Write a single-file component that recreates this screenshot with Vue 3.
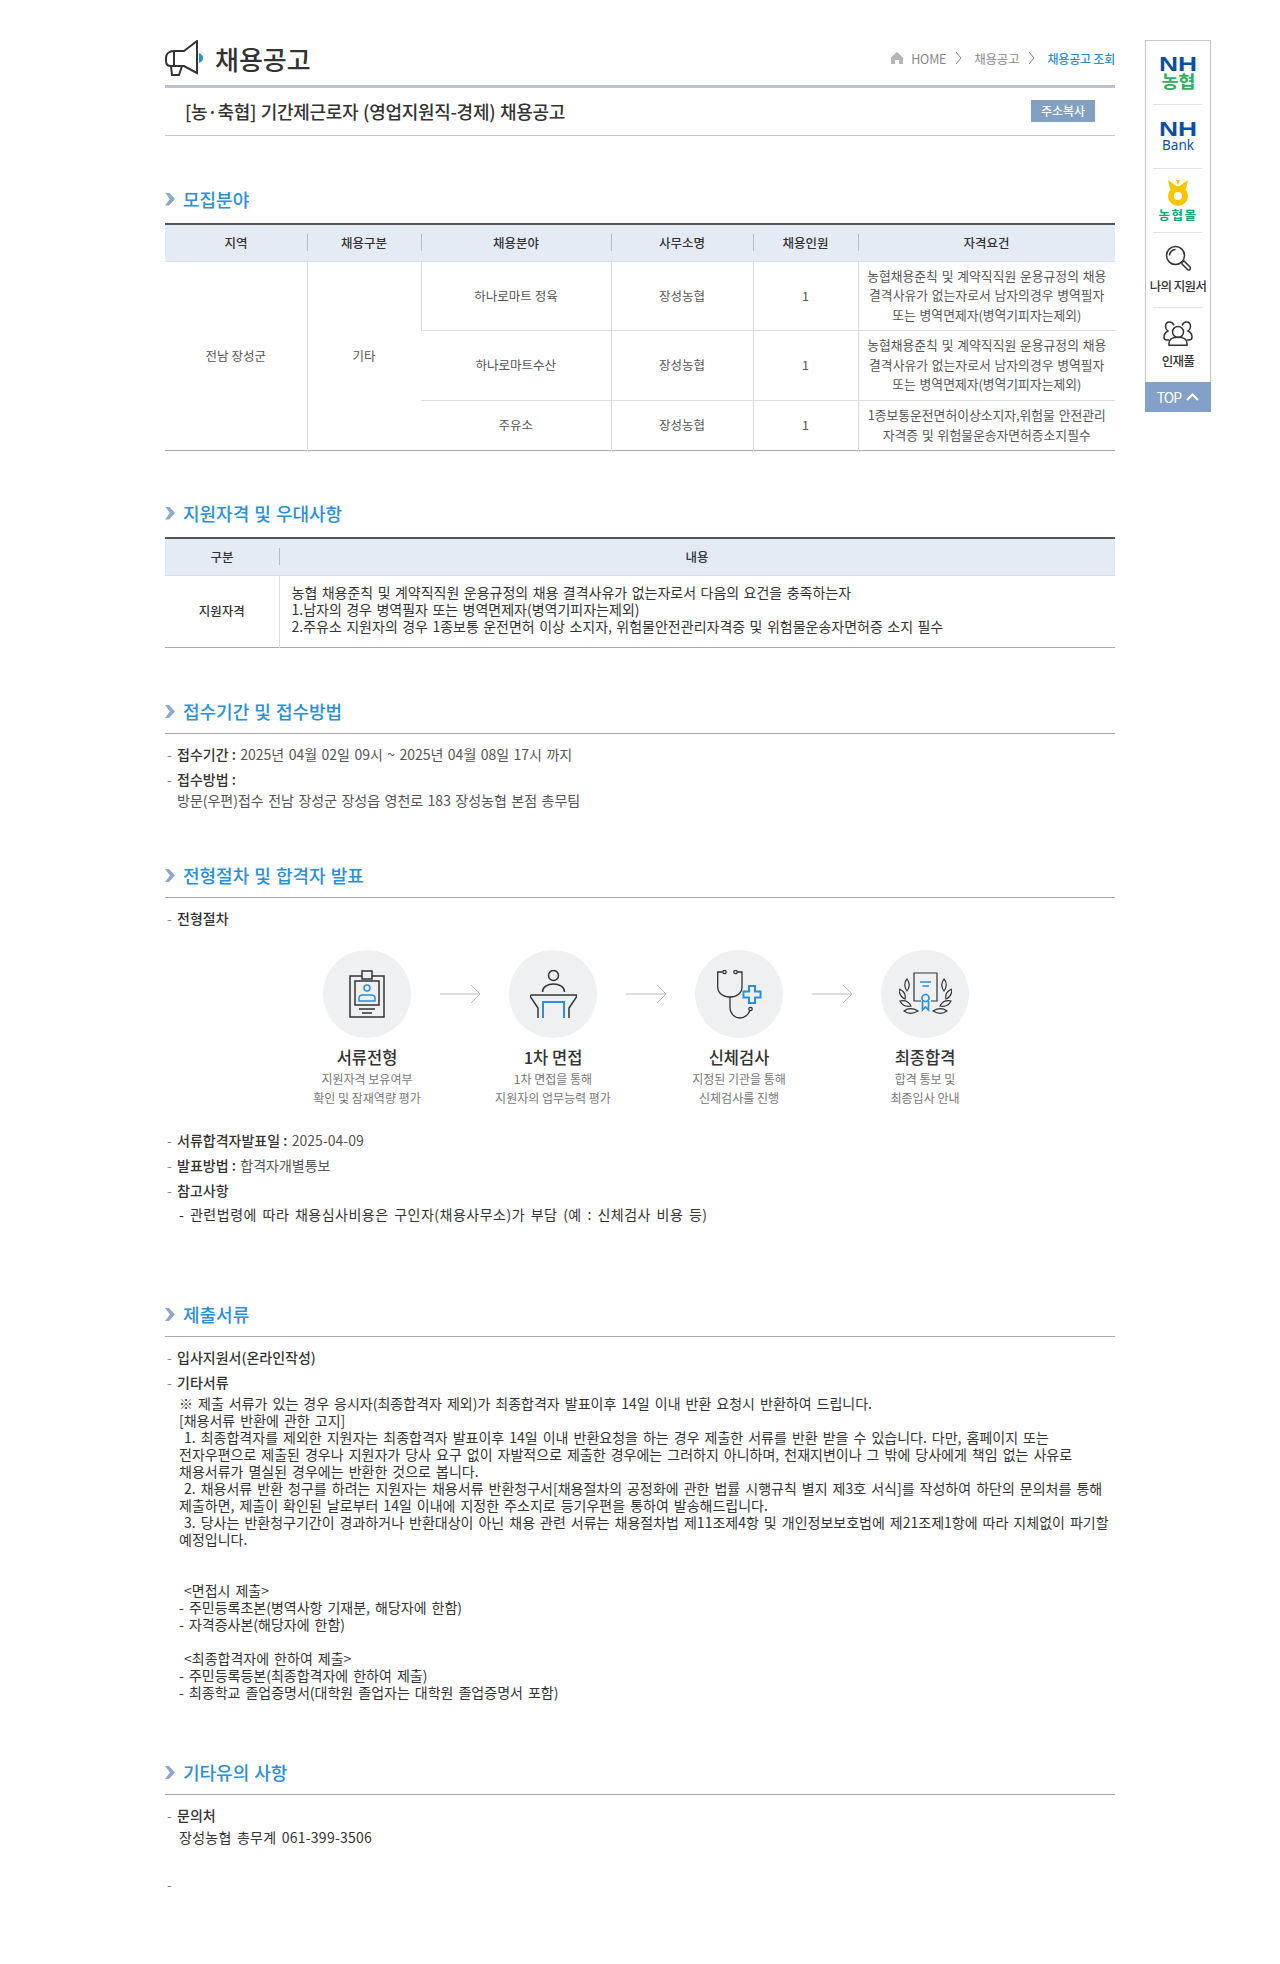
<script setup>
const columns = ['지역', '채용구분', '채용분야', '사무소명', '채용인원', '자격요건']

const rows = [
  { field: '하나로마트 정육', office: '장성농협', count: 1, height: 69, req: '농협채용준칙 및 계약직직원 운용규정의 채용\n결격사유가 없는자로서 남자의경우 병역필자\n또는 병역면제자(병역기피자는제외)' },
  { field: '하나로마트수산', office: '장성농협', count: 1, height: 70, req: '농협채용준칙 및 계약직직원 운용규정의 채용\n결격사유가 없는자로서 남자의경우 병역필자\n또는 병역면제자(병역기피자는제외)' },
  { field: '주유소', office: '장성농협', count: 1, height: 50, req: '1종보통운전면허이상소지자,위험물 안전관리\n자격증 및 위험물운송자면허증소지필수' },
]

const qualText = `농협 채용준칙 및 계약직직원 운용규정의 채용 결격사유가 없는자로서 다음의 요건을 충족하는자
1.남자의 경우 병역필자 또는 병역면제자(병역기피자는제외)
2.주유소 지원자의 경우 1종보통 운전면허 이상 소지자, 위험물안전관리자격증 및 위험물운송자면허증 소지 필수`

const steps = [
  { title: '서류전형', desc: '지원자격 보유여부\n확인 및 잠재역량 평가', icon: 'doc' },
  { title: '1차 면접', desc: '1차 면접을 통해\n지원자의 업무능력 평가', icon: 'desk' },
  { title: '신체검사', desc: '지정된 기관을 통해\n신체검사를 진행', icon: 'steth' },
  { title: '최종합격', desc: '합격 통보 및\n최종입사 안내', icon: 'cert' },
]

const docsText = `※ 제출 서류가 있는 경우 응시자(최종합격자 제외)가 최종합격자 발표이후 14일 이내 반환 요청시 반환하여 드립니다.
[채용서류 반환에 관한 고지]
 1. 최종합격자를 제외한 지원자는 최종합격자 발표이후 14일 이내 반환요청을 하는 경우 제출한 서류를 반환 받을 수 있습니다. 다만, 홈페이지 또는
전자우편으로 제출된 경우나 지원자가 당사 요구 없이 자발적으로 제출한 경우에는 그러하지 아니하며, 천재지변이나 그 밖에 당사에게 책임 없는 사유로
채용서류가 멸실된 경우에는 반환한 것으로 봅니다.
 2. 채용서류 반환 청구를 하려는 지원자는 채용서류 반환청구서[채용절차의 공정화에 관한 법률 시행규칙 별지 제3호 서식]를 작성하여 하단의 문의처를 통해
제출하면, 제출이 확인된 날로부터 14일 이내에 지정한 주소지로 등기우편을 통하여 발송해드립니다.
 3. 당사는 반환청구기간이 경과하거나 반환대상이 아닌 채용 관련 서류는 채용절차법 제11조제4항 및 개인정보보호법에 제21조제1항에 따라 지체없이 파기할
예정입니다.


 <면접시 제출>
- 주민등록초본(병역사항 기재분, 해당자에 한함)
- 자격증사본(해당자에 한함)

 <최종합격자에 한하여 제출>
- 주민등록등본(최종합격자에 한하여 제출)
- 최종학교 졸업증명서(대학원 졸업자는 대학원 졸업증명서 포함)`
</script>

<template>
  <div class="page">
    <main class="content">
      <header class="top">
        <div class="brand">
          <svg width="39" height="36" viewBox="0 0 39 36" fill="none" stroke="#333" stroke-width="2">
            <path d="M32 1L19 11H9C4 11 1 14 1 18V21C1 24 3 26 6 26H19L32 33z" />
            <path d="M9 11V26M6 26L7 35H14L17 26" />
            <path d="M34 13c3 1 4 3 4 5s-1 4-4 5z" fill="#2a8fdc" stroke="none" />
          </svg>
          <h1>채용공고</h1>
        </div>
        <nav class="crumb">
          <svg width="12" height="12" viewBox="0 0 12 12"><path d="M6 0L12 5.500V12H8V8H4v4H0V5.500z" fill="#b5b5b5" /></svg>
          <span class="home">HOME</span>
          <svg class="gt" width="7" height="14" viewBox="0 0 7 14" fill="none" stroke="#888"><path d="M1 1l5 6-5 6" /></svg>
          <span>채용공고</span>
          <svg class="gt" width="7" height="14" viewBox="0 0 7 14" fill="none" stroke="#888"><path d="M1 1l5 6-5 6" /></svg>
          <b>채용공고 조회</b>
        </nav>
      </header>

      <div class="subject">
        <h2>[농·축협] 기간제근로자 (영업지원직-경제) 채용공고</h2>
        <button class="copy">주소복사</button>
      </div>

      <h3 class="sec first">모집분야</h3>
      <table class="tbl">
        <colgroup>
          <col style="width: 142px" />
          <col style="width: 114px" />
          <col style="width: 190px" />
          <col style="width: 142px" />
          <col style="width: 105px" />
          <col />
        </colgroup>
        <thead>
          <tr>
            <th v-for="c in columns" :key="c">{{ c }}</th>
          </tr>
        </thead>
        <tbody>
          <tr v-for="(r, i) in rows" :key="i" :style="{ height: r.height + 'px' }">
            <td v-if="i === 0" class="span" rowspan="3">전남 장성군</td>
            <td v-if="i === 0" class="span" rowspan="3">기타</td>
            <td>{{ r.field }}</td>
            <td>{{ r.office }}</td>
            <td>{{ r.count }}</td>
            <td class="req">{{ r.req }}</td>
          </tr>
        </tbody>
      </table>

      <h3 class="sec">지원자격 및 우대사항</h3>
      <table class="tbl">
        <colgroup>
          <col style="width: 114px" />
          <col />
        </colgroup>
        <thead>
          <tr>
            <th>구분</th>
            <th>내용</th>
          </tr>
        </thead>
        <tbody>
          <tr class="qual">
            <td class="strong">지원자격</td>
            <td class="body">{{ qualText }}</td>
          </tr>
        </tbody>
      </table>

      <h3 class="sec line">접수기간 및 접수방법</h3>
      <ul class="items">
        <li><b>접수기간 :</b> 2025년 04월 02일 09시 ~ 2025년 04월 08일 17시 까지</li>
        <li><b>접수방법 :</b><br />방문(우편)접수 전남 장성군 장성읍 영천로 183 장성농협 본점 총무팀</li>
      </ul>

      <h3 class="sec line process">전형절차 및 합격자 발표</h3>
      <ul class="items">
        <li><b>전형절차</b></li>
      </ul>
      <div class="steps">
        <template v-for="(s, i) in steps" :key="s.title">
          <div class="step">
            <div class="circle">
              <svg v-if="s.icon === 'doc'" width="36" height="48" viewBox="0 0 36 48" fill="none" stroke="#333" stroke-width="1.500">
                <path d="M13 6H1v41h34V6H23" />
                <path d="M13 9V1h10v8z" />
                <path d="M6 11h24v24H6z" />
                <path d="M10 39h16M13 43h10" />
                <circle cx="18" cy="18" r="3" stroke="#2a8fdc" />
                <path d="M10 31v-3c0-2 2-3 4-3h8c2 0 4 1 4 3v3z" stroke="#2a8fdc" />
              </svg>
              <svg v-else-if="s.icon === 'desk'" width="47" height="48" viewBox="0 0 47 48" fill="none" stroke="#333" stroke-width="1.500">
                <circle cx="23.500" cy="5.500" r="5" />
                <path d="M12.500 22c0-5 5-8 11-8s11 3 11 8" />
                <path d="M.5 25H46.500V27L39 38V48M.5 25V27L8 38V48" />
                <path d="M13 48V32h21v16" stroke="#2a8fdc" stroke-width="2" />
              </svg>
              <svg v-else-if="s.icon === 'steth'" width="45" height="49" viewBox="0 0 45 49" fill="none" stroke="#333" stroke-width="1.300">
                <path d="M5.500 2H.7V17C.7 23 6 27 13 27s12-4 12-10V2h-4.500" />
                <circle cx="7.500" cy="2" r="1.700" />
                <circle cx="18.500" cy="2" r="1.700" />
                <path d="M13 27v10c0 7 5 11 10 11s9-4 10-8" />
                <circle cx="33.500" cy="39" r="1.700" />
                <path d="M32 16h6v5.500h5.500v6H38v5.500h-6v-5.500h-5.500v-6H32z" stroke="#2a8fdc" stroke-width="2" fill="#eff0f2" />
              </svg>
              <svg v-else width="53" height="44" viewBox="0 0 53 44" fill="none" stroke="#333" stroke-width="1.200">
                <path d="M22 29h-7V1h23v28h-6" />
                <path d="M8 7c-3 3-3 8 0 12 3-4 3-8 0-12zM0 17c0 4 2 8 6 10 1-4-1-8-6-10zM1 29c2 4 6 6 11 5-2-4-6-6-11-5zM5 39c4 3 9 3 14 0-5-3-10-3-14 0z" />
                <path transform="matrix(-1 0 0 1 53 0)" d="M8 7c-3 3-3 8 0 12 3-4 3-8 0-12zM0 17c0 4 2 8 6 10 1-4-1-8-6-10zM1 29c2 4 6 6 11 5-2-4-6-6-11-5zM5 39c4 3 9 3 14 0-5-3-10-3-14 0z" />
                <path d="M21 10h11M23.500 14h6.500" stroke="#2a8fdc" stroke-width="1.700" />
                <circle cx="26.500" cy="26" r="3.500" stroke="#2a8fdc" stroke-width="1.700" />
                <path d="M23.500 29v9l3-3 3 3v-9" stroke="#2a8fdc" stroke-width="1.700" />
              </svg>
            </div>
            <strong>{{ s.title }}</strong>
            <p>{{ s.desc }}</p>
          </div>
          <svg v-if="i < steps.length - 1" class="arrow" width="41" height="20" viewBox="0 0 41 20" fill="none" stroke="#bbb">
            <path d="M0 10h40M31 1l9 9-9 9" />
          </svg>
        </template>
      </div>
      <ul class="items">
        <li><b>서류합격자발표일 :</b> 2025-04-09</li>
        <li><b>발표방법 :</b> 합격자개별통보</li>
        <li><b>참고사항</b><div class="note">- 관련법령에 따라 채용심사비용은 구인자(채용사무소)가 부담 (예 : 신체검사 비용 등)</div></li>
      </ul>

      <h3 class="sec line docs">제출서류</h3>
      <ul class="items">
        <li><b>입사지원서(온라인작성)</b></li>
        <li><b>기타서류</b><div class="docs-text">{{ docsText }}</div></li>
      </ul>

      <h3 class="sec line etc">기타유의 사항</h3>
      <ul class="items">
        <li><b>문의처</b><div class="note contact">장성농협 총무계 061-399-3506</div></li>
        <li class="empty"></li>
      </ul>
    </main>

    <aside class="side">
      <div class="links">
        <a class="lk nh"><span class="nh-mark">NH</span><span class="nh-sub green">농협</span></a>
        <a class="lk bank"><span class="nh-mark">NH</span><span class="nh-sub blue">Bank</span></a>
        <a class="lk mall">
          <svg width="22" height="26" viewBox="0 0 22 26" fill="#f7c600">
            <path d="M1 0l10 7L21 0l-2 9H3z" />
            <path d="M9 0h4l-2 5z" />
            <circle cx="11" cy="16" r="7" fill="none" stroke="#f7c600" stroke-width="6" />
          </svg>
          <span class="mall-t">농협몰</span>
        </a>
        <a class="lk my">
          <svg width="26" height="26" viewBox="0 0 26 26" fill="none" stroke="#333" stroke-width="1.500">
            <circle cx="10.500" cy="10.500" r="9" />
            <path d="M4.500 10.500c0-3 2.500-6 6-6" />
            <path d="M17 17l2-1 6 6c1 1 0 3-1 3l-1 0-6-6z" />
          </svg>
          <span>나의 지원서</span>
        </a>
        <a class="lk pool">
          <svg width="30" height="25" viewBox="0 0 30 25" fill="none" stroke="#333" stroke-width="1.500">
            <circle cx="15" cy="11" r="5.500" />
            <path d="M6 24.250v-2c0-4 4-6 9-6s9 2 9 6v2z" />
            <path d="M11 4.500C10 2 8.500 1 6.500 1 4 1 2.500 3 2.500 5.500c0 2 1 3.500 2.500 4.500C3 11 1 13 1 16c0 2 1 3 3 3h2" />
            <path d="M19 4.500C20 2 21.500 1 23.500 1c2.500 0 4 2 4 4.500 0 2-1 3.500-2.500 4.500 2 1 4 3 4 6 0 2-1 3-3 3h-2" />
          </svg>
          <span>인재풀</span>
        </a>
      </div>
      <a class="to-top">
        TOP
        <svg width="13" height="8" viewBox="0 0 13 8" fill="none" stroke="#fff" stroke-width="2"><path d="M1 7l5.500-5.500L12 7" /></svg>
      </a>
    </aside>
  </div>
</template>

<style>
body {
  background: #fff;
}
</style>

<style scoped>
.page {
  display: flex;
  align-items: flex-start;
  padding-left: 165px;
  height: 1964px;
  box-sizing: border-box;
  font-family: "Noto Sans CJK KR", "Noto Sans", sans-serif;
  color: #555;
  font-size: 14px;
}

.content {
  width: 950px;
  flex: none;
}

.top {
  display: flex;
  justify-content: space-between;
  height: 85px;
  border-bottom: 3px solid #bcc0d3;
}

.brand {
  display: flex;
  align-items: center;
  gap: 11px;
  height: 62px;
  padding-top: 27px;
}

h1 {
  margin: 0;
  font-size: 26px;
  font-weight: 500;
  color: #333;
}

.crumb {
  display: flex;
  align-items: center;
  height: 18px;
  margin-top: 49px;
  font-size: 12.500px;
  color: #888;
  letter-spacing: -0.2px;
}

.crumb .home {
  margin-left: 8px;
}

.crumb .gt {
  margin: 0 12px 0 9px;
}

.crumb b {
  font-size: 12px;
  font-weight: 500;
  color: #2a8fcf;
}

.subject {
  display: flex;
  align-items: center;
  justify-content: space-between;
  height: 45px;
  padding: 0 20px 2px;
  border-bottom: 1px solid #c5c5cd;
}

h2 {
  margin: 0;
  font-size: 18px;
  font-weight: 500;
  letter-spacing: -0.3px;
  word-spacing: 1px;
  color: #333;
}

.copy {
  width: 64px;
  height: 22px;
  padding: 0;
  border: 0;
  background: #82a0c2;
  color: #fff;
  font: 500 12px "Noto Sans CJK KR", sans-serif;
}

.sec {
  display: flex;
  align-items: center;
  gap: 8px;
  height: 30px;
  margin: 47px 0 9px;
  font-size: 18px;
  font-weight: 500;
  word-spacing: 1px;
  color: #2a8fdc;
}

.sec::before {
  content: "";
  width: 10px;
  height: 13px;
  background: #8fa7c8;
  clip-path: polygon(0 0, 40% 0, 100% 50%, 40% 100%, 0 100%, 50% 50%);
}

.sec.first {
  margin-top: 48px;
}

.sec.line {
  align-items: flex-start;
  height: 36px;
  margin: 49px 0 0;
  line-height: 28px;
  border-bottom: 1px solid #aaa;
}

.sec.line::before {
  margin-top: 8px;
}

.sec.process {
  margin-top: 50px;
}

.sec.docs {
  margin-top: 76px;
}

.sec.etc {
  margin-top: 57px;
}

.tbl {
  width: 100%;
  table-layout: fixed;
  border-collapse: collapse;
  border-top: 2px solid #555;
  border-bottom: 1px solid #aaa;
}

.tbl th {
  position: relative;
  height: 34px;
  padding: 0 0 2px;
  background: #e4ebf5;
  border-bottom: 1px solid #dbe0e8;
  font-size: 12.500px;
  font-weight: 500;
  color: #333;
}

.tbl th + th::before {
  content: "";
  position: absolute;
  left: 0;
  top: 9px;
  height: 17px;
  border-left: 1px solid #bbb;
}

.tbl td {
  padding: 0 5px 2px;
  border-left: 1px solid #ddd;
  border-bottom: 1px solid #ddd;
  text-align: center;
  font-size: 12.500px;
  color: #555;
}

.tbl td:first-child {
  border-left: 0;
}

.tbl tr:last-child td,
.tbl td.span {
  border-bottom: 0;
}

.tbl .req {
  font-size: 12.800px;
  line-height: 19.500px;
  white-space: pre-line;
  word-spacing: 1px;
}

.qual {
  height: 72px;
}

.tbl .strong {
  font-weight: 500;
  color: #333;
}

.tbl .body {
  padding: 0 12px 5px;
  text-align: left;
  font-size: 14px;
  line-height: 17px;
  white-space: pre;
  word-spacing: 1.300px;
  color: #333;
}

.items {
  margin: 0;
  padding: 10px 0 0 12px;
  list-style: none;
}

.items li {
  position: relative;
  margin-bottom: 4px;
  line-height: 21px;
  word-spacing: 1.300px;
  color: #555;
}

.items li::before {
  content: "-";
  position: absolute;
  left: -10px;
  color: #888;
}

.items b {
  font-weight: 500;
  word-spacing: 0;
  color: #333;
}

.steps {
  display: flex;
  justify-content: center;
  align-items: flex-start;
  margin: 21px 0 13px;
  padding-left: 12px;
}

.step {
  width: 145px;
  text-align: center;
}

.circle {
  display: flex;
  align-items: center;
  justify-content: center;
  width: 88px;
  height: 88px;
  margin: 0 auto 9px;
  border-radius: 50%;
  background: #eff0f2;
}

.step strong {
  display: block;
  font-size: 16.500px;
  font-weight: 500;
  line-height: 20px;
  color: #333;
}

.step p {
  margin: 2px 0 0;
  font-size: 12px;
  line-height: 19px;
  white-space: pre-line;
  color: #777;
}

.arrow {
  margin: 34px 0 0;
}

.note {
  margin-top: 3px;
  padding-left: 2px;
  font-size: 14px;
  line-height: 20px;
  letter-spacing: 0.5px;
  word-spacing: 2px;
  color: #333;
}

.docs-text {
  margin-top: 2px;
  padding-left: 2px;
  font-size: 14px;
  line-height: 17px;
  white-space: pre;
  word-spacing: 1.900px;
  color: #333;
}

.contact {
  margin-top: 1px;
  letter-spacing: 0.25px;
}

.items .empty {
  height: 21px;
  margin-top: 27px;
}

.side {
  flex: none;
  width: 66px;
  margin: 40px 0 0 30px;
}

.links {
  box-sizing: border-box;
  height: 342px;
  padding: 0 7px;
  border: 1px solid #c8c8c8;
  border-bottom: 0;
}

.lk {
  display: flex;
  flex-direction: column;
  align-items: center;
  justify-content: center;
  height: 64px;
  box-sizing: border-box;
  border-bottom: 1px solid #e4e4e4;
  font-size: 12.500px;
  font-weight: 500;
  color: #333;
  white-space: nowrap;
  letter-spacing: -0.6px;
}

.lk.my {
  height: 75px;
  gap: 5px;
}

.lk.pool {
  height: 74px;
  gap: 5px;
  border-bottom: 0;
}

.lk.mall {
  gap: 3px;
}

.nh-mark {
  display: block;
  height: 14px;
  margin-top: 1px;
  font: 700 19.500px/14px "Liberation Sans", sans-serif;
  color: #0a4fa6;
  letter-spacing: 0;
  transform: scaleX(1.350);
}

.nh-sub {
  display: block;
  margin-top: 2px;
}

.nh-sub.green {
  height: 16px;
  font-size: 17px;
  font-weight: 700;
  line-height: 16px;
  color: #2db05a;
  letter-spacing: -0.5px;
  transform: scaleX(1.100);
}

.nh-sub.blue {
  margin-top: 3px;
  font: 400 13.500px/13px "Noto Sans", sans-serif;
  color: #0a4fa6;
  letter-spacing: 0;
}

.mall-t {
  font-size: 12.500px;
  font-weight: 700;
  color: #12a674;
  letter-spacing: 1.500px;
  line-height: 12px;
}

.to-top {
  display: flex;
  align-items: center;
  justify-content: center;
  gap: 5px;
  height: 30px;
  background: #82a0c8;
  color: #fff;
  font-size: 14px;
  letter-spacing: -1px;
}
</style>
